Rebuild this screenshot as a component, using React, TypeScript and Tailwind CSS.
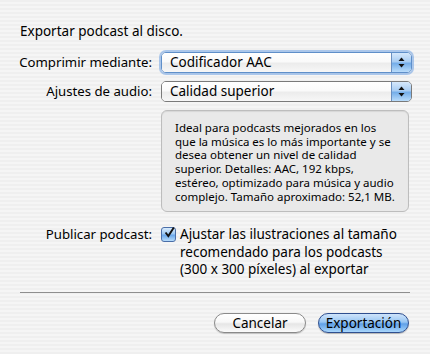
import React from "react";

const font = { fontFamily: '"Lucida Grande", "Noto Sans", "DejaVu Sans", sans-serif' };

function Arrows() {
  return (
    <svg width="7" height="11" viewBox="0 0 7 11">
      <path d="M3.5 0.5 L6.5 4 L0.5 4 Z" fill="#111" />
      <path d="M3.5 10.5 L6.5 7 L0.5 7 Z" fill="#111" />
    </svg>
  );
}

function Popup({ text, focused }: { text: string; focused?: boolean }) {
  return (
    <div
      className={
        "flex h-[21px] w-[251px] items-stretch overflow-hidden rounded-[5px] border " +
        (focused
          ? "border-[#5f8fc9] shadow-[0_0_0_2px_rgba(110,160,225,0.55)]"
          : "border-[#7a7a7a]")
      }
    >
      <div className="flex flex-1 items-center bg-[linear-gradient(180deg,#ffffff_0%,#fafafa_45%,#ececec_55%,#f7f7f7_100%)] pl-[8px] text-[13.5px] text-black">
        {text}
      </div>
      <div className="flex w-[20px] items-center justify-center border-l border-[#6b8fbf] bg-[linear-gradient(180deg,#d6e8fb_0%,#a9cdf3_45%,#75aee9_55%,#b9dcfb_100%)]">
        <Arrows />
      </div>
    </div>
  );
}

const infoLines = [
  "Ideal para podcasts mejorados en los",
  "que la música es lo más importante y se",
  "desea obtener un nivel de calidad",
  "superior. Detalles: AAC, 192 kbps,",
  "estéreo, optimizado para música y audio",
  "complejo. Tamaño aproximado: 52,1 MB.",
];

const checkLines = [
  "Ajustar las ilustraciones al tamaño",
  "recomendado para los podcasts",
  "(300 x 300 píxeles) al exportar",
];

export default function App() {
  return (
    <div
      style={font}
      className="h-[354px] w-[430px] bg-[repeating-linear-gradient(0deg,#efefef_0px,#efefef_2px,#f5f5f5_2px,#f5f5f5_4px)] text-[13.5px] text-black"
    >
      <div className="flex flex-col px-[20px] pt-[23px]">
        <div className="leading-[16px]">Exportar podcast al disco.</div>

        <div className="mt-[13px] grid grid-cols-[132px_1fr] gap-x-[9px]">
          <div className="flex h-[21px] items-center justify-end whitespace-nowrap text-[13.2px]">Comprimir mediante:</div>
          <Popup text="Codificador AAC" focused />

          <div className="mt-[8px] flex h-[21px] items-center justify-end whitespace-nowrap text-[13.2px]">Ajustes de audio:</div>
          <div className="mt-[8px]">
            <Popup text="Calidad superior" />
          </div>

          <div />
          <div className="mt-[8px] h-[102px] w-[248px] rounded-[6px] border border-[#bdbdbd] bg-[#e9e9e9] pl-[13px] pt-[10px] text-[11.5px] leading-[13.7px] shadow-[inset_0_1px_1px_rgba(0,0,0,0.08)]">
            {infoLines.map((l) => (
              <div key={l} className="whitespace-nowrap">{l}</div>
            ))}
          </div>

          <div className="mt-[14px] flex justify-end whitespace-nowrap text-[13.2px] leading-[17.7px]">Publicar podcast:</div>
          <div className="mt-[14px] flex items-start gap-[4px] leading-[17.7px]">
            <div className="mt-[1px] flex h-[15px] w-[15px] shrink-0 items-center justify-center rounded-[3px] border border-[#4a6ea8] bg-[linear-gradient(180deg,#d9ebfc_0%,#9cc8f2_45%,#6aa7ea_55%,#b7dcfb_100%)]">
              <svg width="15" height="15" viewBox="0 0 14 14" className="-mt-[4px] ml-[2px]">
                <path d="M2 7 L5.5 11.5 L12.5 0.5" fill="none" stroke="#111" strokeWidth="2.4" strokeLinejoin="miter" />
              </svg>
            </div>
            <div>
              {checkLines.map((l) => (
                <div key={l} className="whitespace-nowrap">{l}</div>
              ))}
            </div>
          </div>
        </div>

        <div className="mt-[13px] h-px w-[390px] bg-[#8e8e8e]" />

        <div className="mt-[20px] flex justify-end gap-[12px] pr-[1px]">
          <button className="h-[20px] w-[92px] rounded-full border border-[#8a8a8a] bg-[linear-gradient(180deg,#ffffff_0%,#f8f8f8_45%,#e6e6e6_55%,#fbfbfb_100%)] text-[13.5px] leading-[18px] text-black shadow-[0_1px_1px_rgba(0,0,0,0.2)]">
            Cancelar
          </button>
          <button className="h-[20px] w-[91px] rounded-full border border-[#2f4f8f] bg-[linear-gradient(180deg,#cfe4fb_0%,#98c6f3_45%,#5fa0e8_55%,#a9d6fb_100%)] text-[13.5px] leading-[18px] text-black shadow-[0_1px_1px_rgba(0,0,0,0.25)]">
            Exportación
          </button>
        </div>
      </div>
    </div>
  );
}
